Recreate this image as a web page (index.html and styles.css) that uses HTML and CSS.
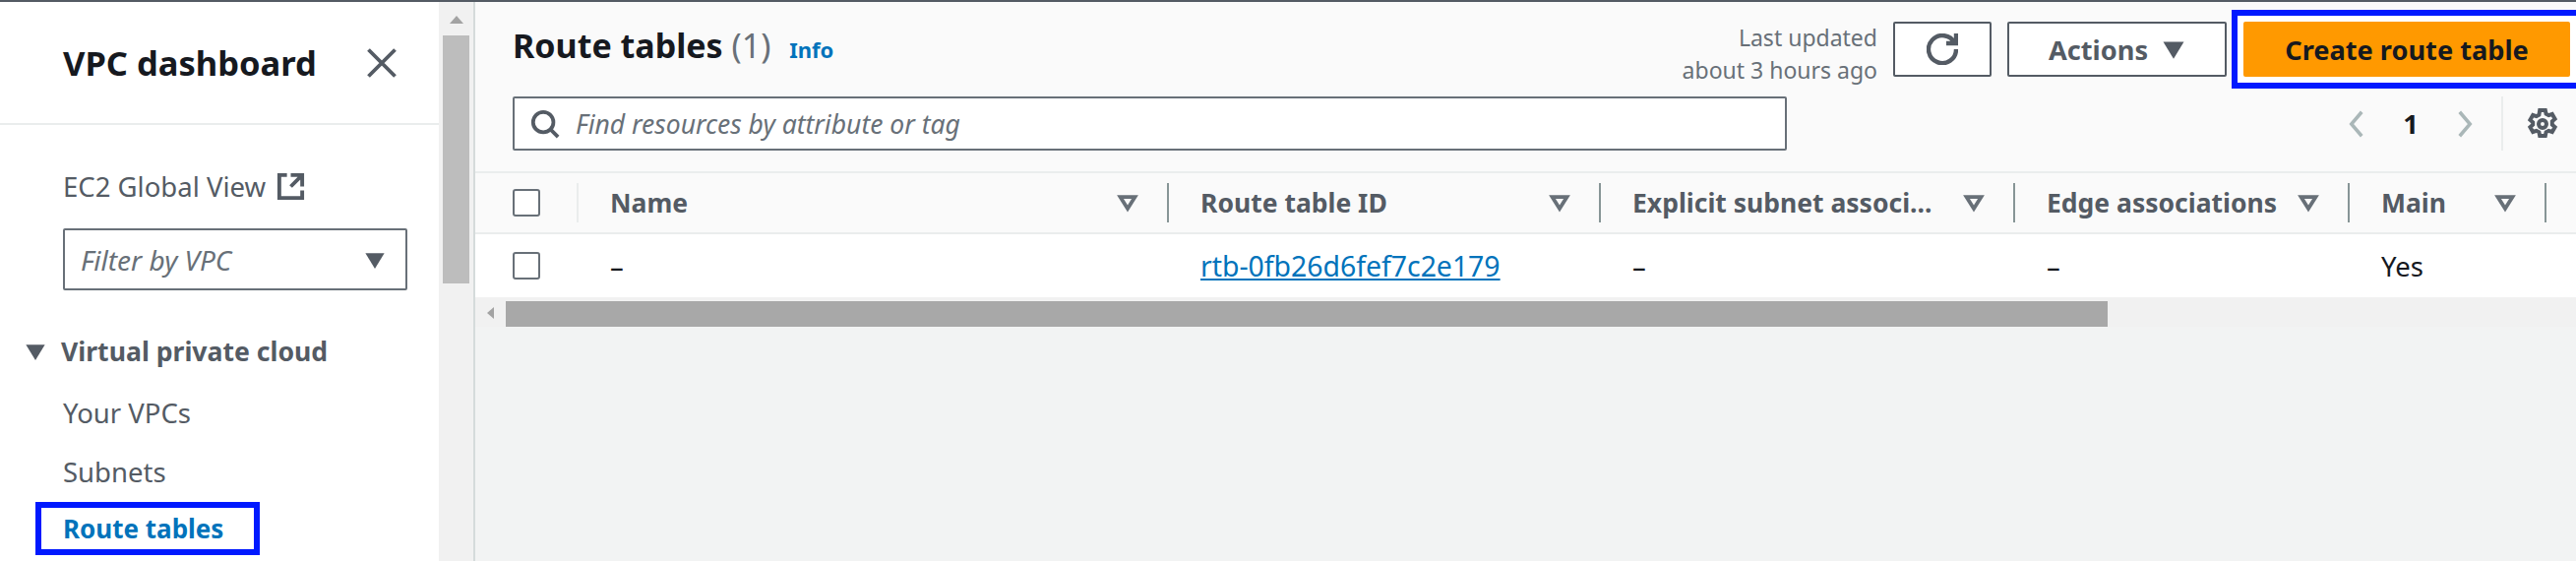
FILE: index.html
```html
<!DOCTYPE html>
<html lang="en">
<head>
    <meta charset="UTF-8">
    <title>Route tables</title>
    <link rel="stylesheet" href="styles.css">
</head>
<body>
<div class="page">
    <aside class="sidebar">
        <div class="nav">
            <div class="nav-head">
                <h2>VPC dashboard</h2>
                <svg class="icon close-icon" viewBox="0 0 16 16"><path d="M2 2l12 12M14 2L2 14"/></svg>
            </div>
            <div class="nav-body">
                <a class="global-link">EC2 Global View
                    <svg class="icon ext-icon" viewBox="0 0 16 16"><path d="M14 8V2H8M14 2L8 8M6 2H2v12h12v-4"/></svg>
                </a>
                <div class="vpc-filter">
                    <span>Filter by VPC</span>
                    <svg class="caret" viewBox="0 0 16 16"><path d="M1 3h14L8 14.5z"/></svg>
                </div>
                <div class="nav-group">
                    <svg class="caret" viewBox="0 0 16 16"><path d="M1 3h14L8 14.5z"/></svg>
                    <span>Virtual private cloud</span>
                </div>
                <ul class="nav-list">
                    <li>Your VPCs</li>
                    <li>Subnets</li>
                    <li class="active">Route tables</li>
                </ul>
            </div>
        </div>
        <div class="nav-scroll">
            <div class="arrow-up"></div>
            <div class="nav-thumb"></div>
        </div>
    </aside>

    <main class="content">
        <section class="panel">
            <div class="top-row">
                <h1>Route tables <span class="count">(1)</span> <a class="info">Info</a></h1>
                <div class="actions">
                    <div class="updated">Last updated<br>about 3 hours ago</div>
                    <button class="btn btn-refresh">
                        <svg class="icon" viewBox="0 0 16 16"><path d="M10 5h5V0M15 8a7 7 0 1 1-.7-3"/></svg>
                    </button>
                    <button class="btn btn-actions">Actions
                        <svg class="caret" viewBox="0 0 16 16"><path d="M1 3h14L8 14.5z"/></svg>
                    </button>
                    <div class="highlight-btn">
                        <button class="btn btn-primary">Create route table</button>
                    </div>
                </div>
            </div>
            <div class="filter-row">
                <div class="search">
                    <svg class="icon" viewBox="0 0 16 16"><circle cx="7" cy="7" r="5.5"/><path d="M11 11l4 4"/></svg>
                    <span>Find resources by attribute or tag</span>
                </div>
                <div class="pager">
                    <svg class="icon chev off" viewBox="0 0 16 16"><path d="M11 1L5 8l6 7"/></svg>
                    <span class="page-num">1</span>
                    <svg class="icon chev off" viewBox="0 0 16 16"><path d="M5 1l6 7-6 7"/></svg>
                    <div class="pager-sep">
                        <svg class="icon gear" viewBox="0 0 16 16">
                            <path d="M6.6 1h2.8l.4 1.9 1.3.7 1.8-.6 1.4 2.4-1.4 1.3v1.6l1.4 1.3-1.4 2.4-1.8-.6-1.3.7-.4 1.9H6.6l-.4-1.9-1.3-.7-1.8.6-1.4-2.4 1.4-1.3V7.2L1.7 5.9l1.4-2.4 1.8.6 1.3-.7z"/>
                            <circle cx="8" cy="8" r="2"/>
                        </svg>
                    </div>
                </div>
            </div>
        </section>

        <div class="grid grid-head">
            <div class="cell cell-check"><span class="check"></span></div>
            <div class="cell cell-name">Name<svg class="sort" viewBox="0 0 16 16"><path d="M3 4h10L8 12z"/></svg></div>
            <div class="cell cell-id">Route table ID<svg class="sort" viewBox="0 0 16 16"><path d="M3 4h10L8 12z"/></svg></div>
            <div class="cell cell-subnet">Explicit subnet associ...<svg class="sort" viewBox="0 0 16 16"><path d="M3 4h10L8 12z"/></svg></div>
            <div class="cell cell-edge">Edge associations<svg class="sort" viewBox="0 0 16 16"><path d="M3 4h10L8 12z"/></svg></div>
            <div class="cell cell-main">Main<svg class="sort" viewBox="0 0 16 16"><path d="M3 4h10L8 12z"/></svg></div>
        </div>
        <div class="grid grid-row">
            <div class="cell cell-check"><span class="check"></span></div>
            <div class="cell cell-name">–</div>
            <div class="cell cell-id"><a class="rtb-link">rtb-0fb26d6fef7c2e179</a></div>
            <div class="cell cell-subnet">–</div>
            <div class="cell cell-edge">–</div>
            <div class="cell cell-main">Yes</div>
        </div>
        <div class="h-scroll">
            <div class="arrow-left"></div>
            <div class="h-thumb"></div>
        </div>
    </main>
</div>
</body>
</html>
```

FILE: styles.css
```css
* {
    box-sizing: border-box;
}

html, body {
    margin: 0;
    height: 570px;
    overflow: hidden;
}

body {
    font-family: "Noto Sans", sans-serif;
    font-size: 27.5px;
    color: #16191f;
    background-color: #f2f3f3;
}

.page {
    display: flex;
    height: 570px;
    border-top: 2px solid #545b64;
}

.icon {
    fill: none;
    stroke: #545b64;
    stroke-width: 2;
}

.caret {
    fill: #545b64;
}

/* sidebar */
.sidebar {
    display: flex;
    width: 483px;
    flex-shrink: 0;
    border-right: 2px solid #d5dbdb;
}

.nav {
    width: 446px;
    background-color: white;
}

.nav-head {
    display: flex;
    align-items: center;
    justify-content: space-between;
    height: 125px;
    padding: 0 40px 0 64px;
    border-bottom: 2px solid #eaeded;
}

.nav-head h2 {
    margin: 0;
    font-size: 34.5px;
    font-weight: 700;
}

.close-icon {
    width: 36px;
    height: 36px;
    stroke-width: 1.7;
}

.nav-body {
    padding: 43px 32px 0 0;
}

.global-link {
    display: flex;
    align-items: center;
    gap: 10px;
    height: 38px;
    padding-left: 64px;
    color: #545b64;
}

.ext-icon {
    width: 31px;
    height: 31px;
}

.vpc-filter {
    display: flex;
    align-items: center;
    justify-content: space-between;
    width: 350px;
    height: 63px;
    margin: 24px 0 0 64px;
    padding: 0 20px 0 16px;
    border: 2px solid #687078;
    border-radius: 2px;
    font-size: 28px;
    font-style: italic;
    color: #687078;
}

.vpc-filter .caret {
    width: 22px;
    height: 22px;
}

.nav-group {
    display: flex;
    align-items: center;
    gap: 15px;
    margin: 44px 0 0 25px;
    font-size: 26.6px;
    font-weight: 700;
    color: #545b64;
}

.nav-group .caret {
    width: 22px;
    height: 22px;
}

.nav-list {
    list-style: none;
    margin: 15px 0 0;
    padding: 0;
    color: #545b64;
}

.nav-list li {
    padding-left: 64px;
    height: 60px;
    line-height: 60px;
}

.nav-list li.active {
    width: 228px;
    height: 54px;
    line-height: 42px;
    margin-left: 36px;
    padding-left: 22px;
    border: 6px solid #0019ff;
    font-size: 26px;
    font-weight: 700;
    color: #0073bb;
}

.nav-scroll {
    position: relative;
    width: 35px;
    background-color: #f1f1f1;
    padding: 34px 4px 0;
}

.arrow-up {
    width: 0;
    margin: -20px auto 12px;
    border: 7px solid transparent;
    border-top: 0;
    border-bottom: 8px solid #a3a3a3;
}

.nav-thumb {
    height: 252px;
    background-color: #bdbdbd;
}

/* main panel */
.content {
    flex: 1;
    min-width: 0;
}

.panel {
    height: 174px;
    background-color: #fafafa;
    border-bottom: 2px solid #eaeded;
    padding-left: 38px;
}

.top-row {
    display: flex;
    justify-content: space-between;
    height: 96px;
}

.top-row h1 {
    margin: 24px 0 0;
    font-size: 34px;
    font-weight: 700;
    line-height: 40px;
}

.count {
    font-weight: 400;
    color: #687078;
}

.info {
    margin-left: 10px;
    font-size: 22px;
    font-weight: 700;
    color: #0073bb;
}

.actions {
    display: flex;
    align-items: flex-start;
}

.updated {
    width: 240px;
    margin: 20px 16px 0 0;
    font-size: 23px;
    line-height: 33px;
    text-align: right;
    color: #687078;
}

.btn {
    height: 56px;
    margin-top: 20px;
    border: 2px solid #545b64;
    border-radius: 2px;
    background-color: white;
    font-family: inherit;
    font-size: 27.2px;
    font-weight: 700;
    color: #545b64;
}

.btn-refresh {
    display: flex;
    align-items: center;
    justify-content: center;
    width: 100px;
    margin-right: 16px;
    padding: 0;
}

.btn-refresh .icon {
    width: 32px;
    height: 32px;
    stroke-width: 2.2;
}

.btn-actions {
    display: flex;
    align-items: center;
    justify-content: center;
    gap: 14px;
    width: 223px;
    padding: 0;
}

.btn-actions .caret {
    width: 24px;
    height: 24px;
}

.highlight-btn {
    width: 350px;
    height: 80px;
    margin: 8px 0 0 5px;
    padding: 6px;
    border: 6px solid #0019ff;
    border-right: 0;
    background-color: white;
}

.btn-primary {
    display: block;
    width: 332px;
    height: 56px;
    margin: 0;
    border: 0;
    background-color: #ff9900;
    color: #16191f;
}

.filter-row {
    display: flex;
    justify-content: space-between;
}

.search {
    display: flex;
    align-items: center;
    gap: 16px;
    width: 1295px;
    height: 55px;
    padding-left: 16px;
    border: 2px solid #687078;
    border-radius: 2px;
    background-color: white;
    font-size: 26.5px;
    font-style: italic;
    color: #687078;
}

.search .icon {
    width: 30px;
    height: 30px;
}

.pager {
    display: flex;
    align-items: center;
    height: 55px;
    font-weight: 700;
}

.chev {
    width: 28px;
    height: 36px;
}

.off {
    stroke: #aab7b8;
}

.page-num {
    width: 82px;
    text-align: center;
}

.pager-sep {
    display: flex;
    align-items: center;
    height: 55px;
    margin-left: 23px;
    padding: 0 18px 0 24px;
    border-left: 2px solid #eaeded;
}

.gear {
    width: 32px;
    height: 32px;
}

/* table */
.grid {
    display: flex;
    align-items: center;
}

.grid-head {
    height: 62px;
    background-color: #fafafa;
    border-bottom: 2px solid #eaeded;
    font-size: 26.5px;
    font-weight: 700;
    color: #545b64;
}

.grid-row {
    height: 64px;
    background-color: white;
}

.cell {
    display: flex;
    align-items: center;
    justify-content: space-between;
    flex-shrink: 0;
    height: 40px;
    padding: 0 28px 0 32px;
}

.grid-head .cell {
    border-right: 2px solid #879596;
}

.grid-head .cell-check {
    border-right-color: #eaeded;
}

.cell-check { width: 105px; padding-left: 38px; }
.cell-name { width: 600px; }
.cell-id { width: 439px; }
.cell-subnet { width: 421px; }
.cell-edge { width: 340px; }
.cell-main { width: 200px; }

.grid-row .cell {
    justify-content: flex-start;
}

.check {
    display: block;
    width: 28px;
    height: 28px;
    border: 2px solid #687078;
    border-radius: 3px;
    background-color: white;
}

.sort {
    width: 24px;
    height: 24px;
    flex-shrink: 0;
    fill: none;
    stroke: #687078;
    stroke-width: 2.5;
}

.rtb-link {
    font-size: 28.4px;
    color: #0073bb;
    text-decoration: underline;
}

.h-scroll {
    display: flex;
    align-items: flex-end;
    height: 30px;
    background-color: #f1f1f1;
}

.arrow-left {
    width: 0;
    margin: 0 12px 8px 12px;
    border: 6px solid transparent;
    border-left: 0;
    border-right: 7px solid #a3a3a3;
}

.h-thumb {
    width: 1628px;
    height: 26px;
    background-color: #a8a8a8;
}
```
